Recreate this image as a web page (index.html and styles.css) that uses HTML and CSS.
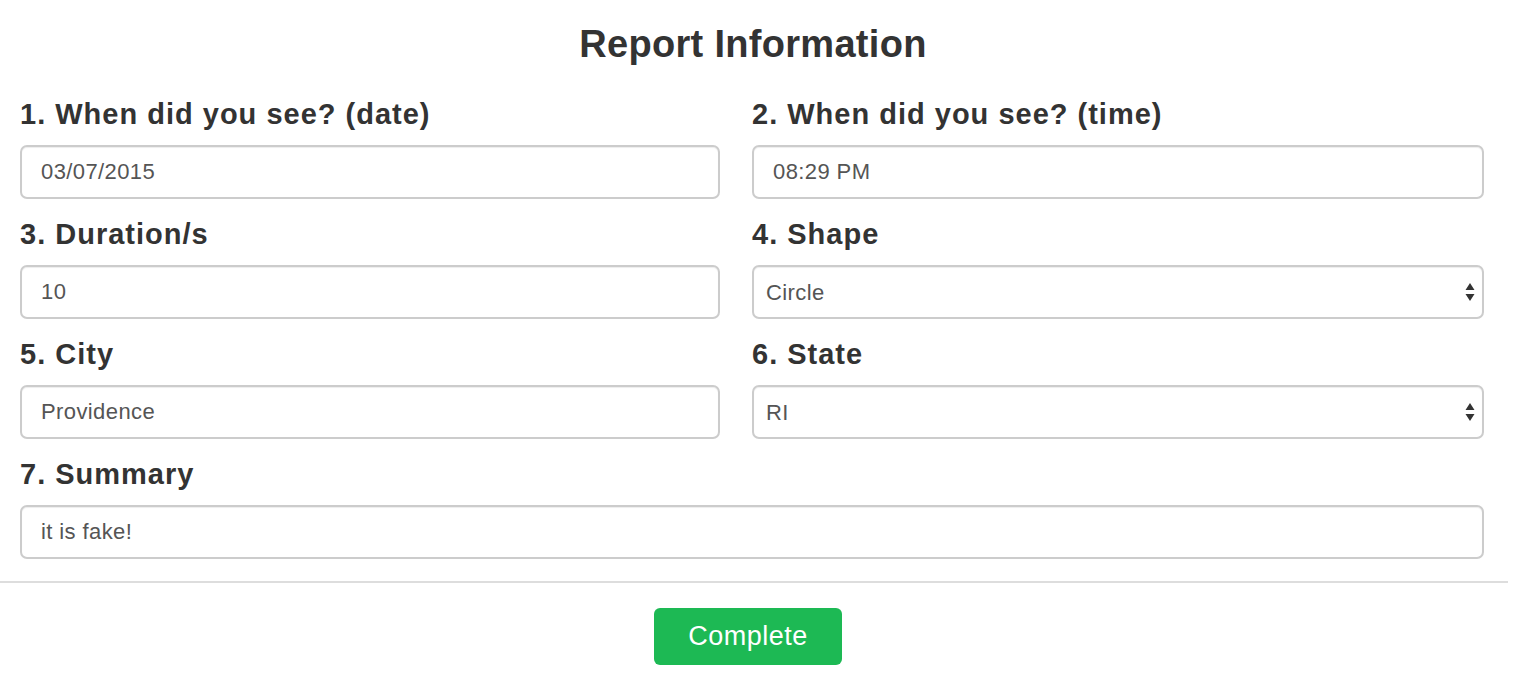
FILE: index.html
```html
<!DOCTYPE html>
<html lang="en">
<head>
<meta charset="utf-8">
<title>Report Information</title>
<link rel="stylesheet" href="styles.css">
</head>
<body>
<div class="page">
  <form class="report">
    <h1 class="title">Report Information</h1>
    <div class="grid">
      <div class="field">
        <label class="label">1. When did you see? (date)</label>
        <input class="control" type="text" value="03/07/2015">
      </div>
      <div class="field">
        <label class="label">2. When did you see? (time)</label>
        <input class="control" type="text" value="08:29 PM">
      </div>
      <div class="field">
        <label class="label">3. Duration/s</label>
        <input class="control" type="text" value="10">
      </div>
      <div class="field">
        <label class="label">4. Shape</label>
        <div class="select-wrap">
          <select class="control select"><option>Circle</option></select>
          <svg class="arrows" width="10" height="20" viewBox="0 0 10 20"><path d="M5 1 L9.5 8 L0.5 8 Z M0.5 12 L9.5 12 L5 19 Z" fill="#333"/></svg>
        </div>
      </div>
      <div class="field">
        <label class="label">5. City</label>
        <input class="control" type="text" value="Providence">
      </div>
      <div class="field">
        <label class="label">6. State</label>
        <div class="select-wrap">
          <select class="control select"><option>RI</option></select>
          <svg class="arrows" width="10" height="20" viewBox="0 0 10 20"><path d="M5 1 L9.5 8 L0.5 8 Z M0.5 12 L9.5 12 L5 19 Z" fill="#333"/></svg>
        </div>
      </div>
      <div class="field wide">
        <label class="label">7. Summary</label>
        <input class="control" type="text" value="it is fake!">
      </div>
    </div>
  </form>
  <hr class="divider">
  <div class="actions">
    <button class="btn-complete" type="button">Complete</button>
  </div>
</div>
</body>
</html>
```

FILE: styles.css
```css
* { box-sizing: border-box; }
html, body { margin: 0; padding: 0; background: #fff; }
body {
  font-family: "Liberation Sans", Arial, Helvetica, sans-serif;
  color: #333;
}
.page {
  width: 1508px;
}
.report {
  padding: 24px 24px 0 20px;
}
.title {
  margin: 0 0 33px;
  text-align: center;
  font-size: 38px;
  line-height: 40px;
  font-weight: 700;
  letter-spacing: 0.3px;
  color: #333;
  padding-left: 2px;
}
.grid {
  display: grid;
  grid-template-columns: 700px 1fr;
  column-gap: 32px;
  row-gap: 18px;
}
.field {
  display: flex;
  flex-direction: column;
}
.field.wide { grid-column: 1 / -1; }
.label {
  display: block;
  font-size: 29px;
  line-height: 31px;
  font-weight: 700;
  letter-spacing: 1px;
  padding-top: 2px;
  margin-bottom: 15px;
  color: #333;
}
.control {
  display: block;
  width: 100%;
  height: 54px;
  margin: 0;
  padding: 0 19px;
  font-family: "Liberation Sans", Arial, Helvetica, sans-serif;
  font-size: 22px;
  letter-spacing: 0.4px;
  color: #555;
  background: #fff;
  border: 2px solid #ccc;
  border-radius: 7px;
  box-shadow: inset 0 1px 1px rgba(0,0,0,.075);
  outline: none;
}
.select-wrap { position: relative; }
.select {
  -webkit-appearance: none;
  appearance: none;
  padding-left: 12px;
}
.arrows {
  position: absolute;
  right: 9px;
  top: 17px;
  pointer-events: none;
}
.divider {
  margin: 22px 0 0;
  border: 0;
  border-top: 2px solid #ddd;
}
.actions {
  display: flex;
  justify-content: center;
  padding-top: 25px;
  padding-right: 12px;
}
.btn-complete {
  width: 188px;
  height: 57px;
  border: 0;
  border-radius: 6px;
  background: #1db954;
  color: #fff;
  font-family: "Liberation Sans", Arial, Helvetica, sans-serif;
  font-size: 27px;
  letter-spacing: 0.5px;
  padding: 0;
}
```
